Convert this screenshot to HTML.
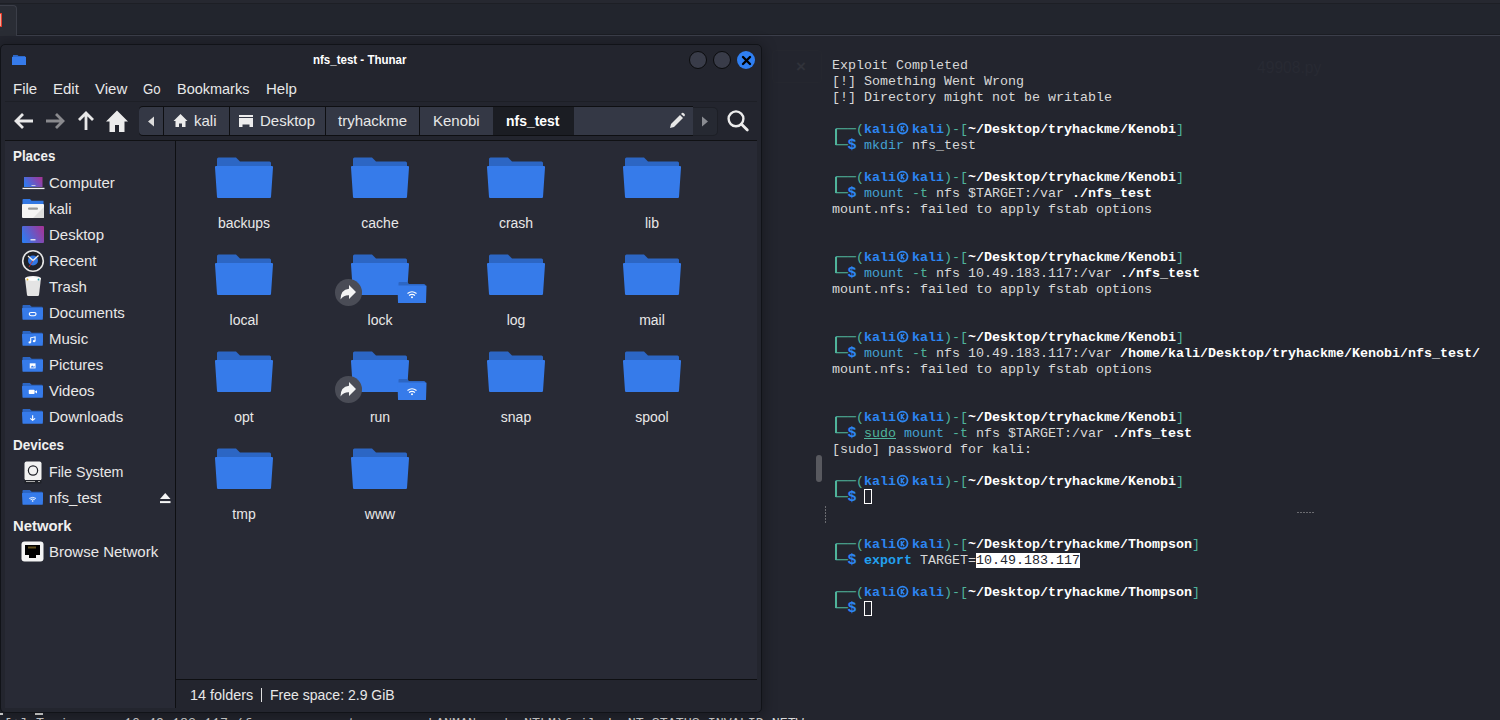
<!DOCTYPE html>
<html><head><meta charset="utf-8">
<style>
*{margin:0;padding:0;box-sizing:border-box}
html,body{width:1500px;height:720px;overflow:hidden;background:#23252e;position:relative;font-family:"Liberation Sans",sans-serif}
.a{position:absolute}
.dol{display:inline-block;width:8px;font-size:15px;text-indent:-0.5px}
.sym{display:inline-block;width:16px;height:1px;position:relative;vertical-align:baseline}
.sym svg{position:absolute;top:-12px}
#topbar{left:0;top:0;width:1500px;height:36px;background:linear-gradient(#262830 0 3px,#1d1f25 3px 4px,#22252d 4px 34px,#1b1d23 34px 35px,#3b3e4a 35px 36px)}
.term{font-family:"Liberation Mono",monospace;font-size:13.333px;line-height:16px;color:#d8d8d8;white-space:pre}
.g{color:#4fb49b}.bl{color:#2d86f2;font-weight:bold}.w{color:#ffffff;font-weight:bold}.cmd{color:#43a2d2}.op{color:#4fb49b}.ex{color:#22a0f0;font-weight:bold}
#win{left:0px;top:44px;width:762px;height:669px;background:#23252e;border:1px solid #111318;border-radius:5px;box-shadow:0 2px 14px 2px rgba(0,0,0,.30);overflow:hidden}
.ui{font-family:"Liberation Sans",sans-serif;color:#e8e8e8;white-space:nowrap}
</style></head><body>
<div id="topbar" class="a"></div>
<div class="a" style="left:0;top:5px;width:17px;height:31px;background:#2a2d35;border:1px solid #3b3e48;border-left:none;border-bottom:none;border-radius:0 4px 0 0"></div>
<div class="a" style="left:0;top:13px;width:2px;height:14px;background:#f2a594;border:1px solid #e63a2b;border-left:none;border-radius:0 1px 1px 0"></div>

<div class="a" style="left:816px;top:455px;width:6px;height:27px;border-radius:3px;background:#58595f"></div>
<div class="a" style="left:825px;top:506px;width:1px;height:17px;background:repeating-linear-gradient(#6a6b70 0 2px,transparent 2px 3px)"></div>
<div class="a" style="left:1297px;top:512px;width:17px;height:1px;background:repeating-linear-gradient(90deg,#6a6b70 0 2px,transparent 2px 3px)"></div>
<div class="a ui" style="left:1257px;top:58px;font-size:17px;color:#282a33;transform-origin:0 0;transform:scaleX(0.92)">49908.py</div>
<div class="a" style="left:772px;top:50px;width:50px;height:33px;border:1px solid #25272f;border-radius:4px"></div>
<div class="a ui" style="left:796px;top:57px;font-size:17px;font-weight:bold;color:#30323a">&#215;</div>
<div class="a term" style="left:4px;top:716px;color:#d8d8d8">[+] Trying     10.49.183.117 (from server  type      LANMAN and  NTLM)failed: NT_STATUS_INVALID_NETW</div>
<div class="a" style="left:0;top:713px;width:3px;height:1.5px;background:#e0e0e0"></div>
<div class="a" style="left:35px;top:713px;width:8px;height:1.5px;background:#e0e0e0"></div>
<!-- terminal -->
<div class="a term" style="left:832px;top:58px">Exploit Completed
[!] Something Went Wrong
[!] Directory might not be writable

<span class="g">┌──(</span><span class="bl">kali<i class="sym"><svg class="a" style="left:0;top:-9.7px" width="16" height="16" viewBox="0 0 16 16"><circle cx="6.6" cy="6.6" r="4.9" fill="none" stroke="#2d86f2" stroke-width="1.8"/><path d="M5.3 4V9.2M8.2 4L5.6 6.6L8.2 9.2" stroke="#2d86f2" stroke-width="1.4" fill="none"/></svg></i>kali</span><span class="g">)-[</span><span class="w">~/Desktop/tryhackme/Kenobi</span><span class="g">]</span>
<span class="g">└─</span><span class="bl dol">$</span> <span class="cmd">mkdir</span> nfs_test

<span class="g">┌──(</span><span class="bl">kali<i class="sym"><svg class="a" style="left:0;top:-9.7px" width="16" height="16" viewBox="0 0 16 16"><circle cx="6.6" cy="6.6" r="4.9" fill="none" stroke="#2d86f2" stroke-width="1.8"/><path d="M5.3 4V9.2M8.2 4L5.6 6.6L8.2 9.2" stroke="#2d86f2" stroke-width="1.4" fill="none"/></svg></i>kali</span><span class="g">)-[</span><span class="w">~/Desktop/tryhackme/Kenobi</span><span class="g">]</span>
<span class="g">└─</span><span class="bl dol">$</span> <span class="cmd">mount</span> <span class="op">-t</span> nfs $TARGET:/var <span class="w">./nfs_test</span>
mount.nfs: failed to apply fstab options


<span class="g">┌──(</span><span class="bl">kali<i class="sym"><svg class="a" style="left:0;top:-9.7px" width="16" height="16" viewBox="0 0 16 16"><circle cx="6.6" cy="6.6" r="4.9" fill="none" stroke="#2d86f2" stroke-width="1.8"/><path d="M5.3 4V9.2M8.2 4L5.6 6.6L8.2 9.2" stroke="#2d86f2" stroke-width="1.4" fill="none"/></svg></i>kali</span><span class="g">)-[</span><span class="w">~/Desktop/tryhackme/Kenobi</span><span class="g">]</span>
<span class="g">└─</span><span class="bl dol">$</span> <span class="cmd">mount</span> <span class="op">-t</span> nfs 10.49.183.117:/var <span class="w">./nfs_test</span>
mount.nfs: failed to apply fstab options


<span class="g">┌──(</span><span class="bl">kali<i class="sym"><svg class="a" style="left:0;top:-9.7px" width="16" height="16" viewBox="0 0 16 16"><circle cx="6.6" cy="6.6" r="4.9" fill="none" stroke="#2d86f2" stroke-width="1.8"/><path d="M5.3 4V9.2M8.2 4L5.6 6.6L8.2 9.2" stroke="#2d86f2" stroke-width="1.4" fill="none"/></svg></i>kali</span><span class="g">)-[</span><span class="w">~/Desktop/tryhackme/Kenobi</span><span class="g">]</span>
<span class="g">└─</span><span class="bl dol">$</span> <span class="cmd">mount</span> <span class="op">-t</span> nfs 10.49.183.117:/var <span class="w">/home/kali/Desktop/tryhackme/Kenobi/nfs_test/</span>
mount.nfs: failed to apply fstab options


<span class="g">┌──(</span><span class="bl">kali<i class="sym"><svg class="a" style="left:0;top:-9.7px" width="16" height="16" viewBox="0 0 16 16"><circle cx="6.6" cy="6.6" r="4.9" fill="none" stroke="#2d86f2" stroke-width="1.8"/><path d="M5.3 4V9.2M8.2 4L5.6 6.6L8.2 9.2" stroke="#2d86f2" stroke-width="1.4" fill="none"/></svg></i>kali</span><span class="g">)-[</span><span class="w">~/Desktop/tryhackme/Kenobi</span><span class="g">]</span>
<span class="g">└─</span><span class="bl dol">$</span> <span class="op" style="text-decoration:underline">sudo</span> <span class="cmd">mount</span> <span class="op">-t</span> nfs $TARGET:/var <span class="w">./nfs_test</span>
[sudo] password for kali:

<span class="g">┌──(</span><span class="bl">kali<i class="sym"><svg class="a" style="left:0;top:-9.7px" width="16" height="16" viewBox="0 0 16 16"><circle cx="6.6" cy="6.6" r="4.9" fill="none" stroke="#2d86f2" stroke-width="1.8"/><path d="M5.3 4V9.2M8.2 4L5.6 6.6L8.2 9.2" stroke="#2d86f2" stroke-width="1.4" fill="none"/></svg></i>kali</span><span class="g">)-[</span><span class="w">~/Desktop/tryhackme/Kenobi</span><span class="g">]</span>
<span class="g">└─</span><span class="bl dol">$</span> <span style="outline:1px solid #fff;outline-offset:-1px;position:relative;top:-1px">&nbsp;</span></div>

<div class="a term" style="left:832px;top:537px"><span class="g">┌──(</span><span class="bl">kali<i class="sym"><svg class="a" style="left:0;top:-9.7px" width="16" height="16" viewBox="0 0 16 16"><circle cx="6.6" cy="6.6" r="4.9" fill="none" stroke="#2d86f2" stroke-width="1.8"/><path d="M5.3 4V9.2M8.2 4L5.6 6.6L8.2 9.2" stroke="#2d86f2" stroke-width="1.4" fill="none"/></svg></i>kali</span><span class="g">)-[</span><span class="w">~/Desktop/tryhackme/Thompson</span><span class="g">]</span>
<span class="g">└─</span><span class="bl dol">$</span> <span class="ex">export</span> TARGET=<span style="background:#fff;color:#23252e">10.49.183.117</span>

<span class="g">┌──(</span><span class="bl">kali<i class="sym"><svg class="a" style="left:0;top:-9.7px" width="16" height="16" viewBox="0 0 16 16"><circle cx="6.6" cy="6.6" r="4.9" fill="none" stroke="#2d86f2" stroke-width="1.8"/><path d="M5.3 4V9.2M8.2 4L5.6 6.6L8.2 9.2" stroke="#2d86f2" stroke-width="1.4" fill="none"/></svg></i>kali</span><span class="g">)-[</span><span class="w">~/Desktop/tryhackme/Thompson</span><span class="g">]</span>
<span class="g">└─</span><span class="bl dol">$</span> <span style="outline:1px solid #fff;outline-offset:-1px">&nbsp;</span></div>

<div class="a" style="left:835px;top:129px;width:1.5px;height:16px;background:#4fb49b"></div>
<div class="a" style="left:835px;top:177px;width:1.5px;height:16px;background:#4fb49b"></div>
<div class="a" style="left:835px;top:257px;width:1.5px;height:16px;background:#4fb49b"></div>
<div class="a" style="left:835px;top:337px;width:1.5px;height:16px;background:#4fb49b"></div>
<div class="a" style="left:835px;top:417px;width:1.5px;height:16px;background:#4fb49b"></div>
<div class="a" style="left:835px;top:481px;width:1.5px;height:16px;background:#4fb49b"></div>
<div class="a" style="left:835px;top:544px;width:1.5px;height:16px;background:#4fb49b"></div>
<div class="a" style="left:835px;top:592px;width:1.5px;height:16px;background:#4fb49b"></div>
<!-- Thunar window -->
<svg width="0" height="0" style="position:absolute">
<defs>
<symbol id="fold" viewBox="0 0 58 42">
<path d="M3.5 0.5 H21 L25 4.5 H54.5 Q56 4.5 56 6 V20 H2 V2 Q2 0.5 3.5 0.5Z" fill="#2c66c4"/>
<path d="M1 9 H57 Q58.2 9 58 10.5 L56 40 Q55.9 41 55 41 H3 Q2.1 41 2 40 L0 10.5 Q-0.2 9 1 9Z" fill="#367bea"/>
</symbol>
<symbol id="sfold" viewBox="0 0 22 18" preserveAspectRatio="none">
<path d="M1.5 0 H8 L10 2 H20.5 Q21.5 2 21.5 3 V8 H0.5 V1 Q0.5 0 1.5 0Z" fill="#2c66c4"/>
<path d="M0.5 3.5 H21.5 Q22 3.5 22 4 L21.5 17 Q21.5 17.5 21 17.5 H1 Q0.5 17.5 0.5 17 L0 4 Q0 3.5 0.5 3.5Z" fill="#367bea"/>
</symbol>
</defs>
</svg>
<div id="win" class="a"></div>
<!-- titlebar -->
<svg class="a" style="left:12px;top:55px" width="14" height="10" viewBox="0 0 14 10"><path d="M1 0H5.5L6.5 1H13V4H1Z" fill="#2c66c4"/><path d="M0 1.8H14V10H0Z" fill="#367bea"/></svg>
<div class="a ui" style="left:313px;top:52.7px;font-size:12px;font-weight:bold;color:#ffffff;transform-origin:0 0;transform:scaleX(0.96)">nfs_test - Thunar</div>
<div class="a" style="left:688.8px;top:50.8px;width:18.4px;height:18.4px;border-radius:50%;background:#393c49;border:1.5px solid #0a0b0d"></div>
<div class="a" style="left:712.8px;top:50.8px;width:18.4px;height:18.4px;border-radius:50%;background:#393c49;border:1.5px solid #0a0b0d"></div>
<div class="a" style="left:736.8px;top:50.8px;width:18.4px;height:18.4px;border-radius:50%;background:#2f7ff2"></div>
<svg class="a" style="left:736.5px;top:50.5px" width="19" height="19" viewBox="0 0 19 19"><path d="M6 6L13 13M13 6L6 13" stroke="#000" stroke-width="2.4" stroke-linecap="round"/></svg>
<!-- menubar -->
<div class="a ui" style="left:13px;top:80px;font-size:15px">File</div>
<div class="a ui" style="left:53px;top:80px;font-size:15px">Edit</div>
<div class="a ui" style="left:95px;top:80px;font-size:15px">View</div>
<div class="a ui" style="left:143px;top:80px;font-size:15px;transform-origin:0 0;transform:scaleX(0.88)">Go</div>
<div class="a ui" style="left:177px;top:80px;font-size:15px;transform-origin:0 0;transform:scaleX(0.965)">Bookmarks</div>
<div class="a ui" style="left:266px;top:80px;font-size:15px">Help</div>
<div class="a" style="left:5px;top:101px;width:752px;height:1px;background:#1d1f26"></div>
<!-- toolbar icons -->
<svg class="a" style="left:13px;top:110px" width="22" height="22" viewBox="0 0 22 22"><path d="M20 11H4M10 4L3 11L10 18" stroke="#e8e8e8" stroke-width="2.8" fill="none"/></svg>
<svg class="a" style="left:44px;top:110px" width="22" height="22" viewBox="0 0 22 22"><path d="M2 11H18M12 4L19 11L12 18" stroke="#8a8a8e" stroke-width="2.8" fill="none"/></svg>
<svg class="a" style="left:75px;top:110px" width="22" height="22" viewBox="0 0 22 22"><path d="M11 20V4M4 10L11 3L18 10" stroke="#e8e8e8" stroke-width="2.8" fill="none"/></svg>
<svg class="a" style="left:105px;top:109px" width="24" height="24" viewBox="0 0 24 24"><path d="M12 1.5L1 12.5H4.5V23H10V16H14V23H19.5V12.5H23Z" fill="#ececec"/></svg>
<!-- pathbar -->
<div class="a" style="left:692px;top:106.5px;width:26px;height:29px;background:#262932;border:1px solid #1d1f26;border-left:none;border-radius:0 5px 5px 0"></div>
<div class="a" style="left:139px;top:106px;width:554px;height:30px;background:#0e0f12;border-radius:4px 0 0 4px"></div>
<div class="a" style="left:139px;top:107px;width:24px;height:27.5px;background:#343845;border-radius:4px 0 0 4px"></div>
<div class="a" style="left:164px;top:107px;width:65px;height:27.5px;background:#343845"></div>
<div class="a" style="left:230px;top:107px;width:95px;height:27.5px;background:#343845"></div>
<div class="a" style="left:326px;top:107px;width:93px;height:27.5px;background:#343845"></div>
<div class="a" style="left:420px;top:107px;width:73px;height:27.5px;background:#343845"></div>
<div class="a" style="left:493px;top:107px;width:81px;height:27.5px;background:#1b1d23"></div>
<div class="a" style="left:574px;top:107px;width:119px;height:27.5px;background:#343845"></div>
<svg class="a" style="left:146px;top:116px" width="10" height="11" viewBox="0 0 10 11"><path d="M8 0.5V10.5L2 5.5Z" fill="#dcdcdc"/></svg>
<svg class="a" style="left:173px;top:114px" width="15" height="14" viewBox="0 0 15 14"><path d="M7.5 0L0.5 7H2.5V13H6V9.5H9V13H12.5V7H14.5Z" fill="#ececec"/></svg>
<div class="a ui" style="left:194px;top:112px;font-size:15px">kali</div>
<svg class="a" style="left:238px;top:114px" width="16" height="14" viewBox="0 0 16 14"><path d="M1 1H15V3H1Z M1 4H15V13H11.5V10.5H4.5V13H1Z" fill="#ececec"/></svg>
<div class="a ui" style="left:260px;top:112px;font-size:15px">Desktop</div>
<div class="a ui" style="left:338px;top:112px;font-size:15px">tryhackme</div>
<div class="a ui" style="left:433px;top:112px;font-size:15px">Kenobi</div>
<div class="a ui" style="left:506px;top:112px;font-size:15px;font-weight:bold;color:#fff;transform-origin:0 0;transform:scaleX(0.93)">nfs_test</div>
<svg class="a" style="left:668px;top:112px" width="18" height="18" viewBox="0 0 18 18"><path d="M2 16L3 12L12 3L15 6L6 15Z" fill="#e8e8e8"/><path d="M13 2L14 1Q15 0.5 16 1.5L16.5 2Q17.5 3 16.5 4L16 4.5Z" fill="#e8e8e8"/></svg>
<svg class="a" style="left:700px;top:116px" width="10" height="11" viewBox="0 0 10 11"><path d="M2 0.5V10.5L8 5.5Z" fill="#8a8c92"/></svg>
<svg class="a" style="left:726px;top:109px" width="24" height="24" viewBox="0 0 24 24"><circle cx="10" cy="9.8" r="7.4" stroke="#ececec" stroke-width="2.4" fill="none"/><path d="M15.3 15.1L21.3 21.1" stroke="#ececec" stroke-width="2.8" stroke-linecap="round"/></svg>
<!-- separators -->
<div class="a" style="left:5px;top:140px;width:752px;height:1px;background:#101114"></div>
<!-- sidebar -->
<div class="a" style="left:5px;top:141px;width:170px;height:567px;background:#282a35"></div>
<div class="a" style="left:175px;top:141px;width:1px;height:567px;background:#0e0f12"></div>
<!-- icon view -->
<div class="a" style="left:176px;top:141px;width:581px;height:539px;background:#282a35"></div>
<div class="a" style="left:176px;top:679px;width:581px;height:1px;background:#0e0f12"></div>
<div class="a ui" style="left:13px;top:147.30px;font-size:15px;line-height:17px;font-weight:bold;color:#f0f0f0;transform-origin:0 0;transform:scaleX(0.89)">Places</div>
<div class="a ui" style="left:13px;top:436.30px;font-size:15px;line-height:17px;font-weight:bold;color:#f0f0f0;transform-origin:0 0;transform:scaleX(0.9)">Devices</div>
<div class="a ui" style="left:13px;top:517.30px;font-size:15px;line-height:17px;font-weight:bold;color:#f0f0f0;transform-origin:0 0;transform:scaleX(0.99)">Network</div>
<div class="a ui" style="left:49px;top:174.30px;font-size:15px;line-height:17px">Computer</div>
<div class="a ui" style="left:49px;top:200.30px;font-size:15px;line-height:17px">kali</div>
<div class="a ui" style="left:49px;top:226.30px;font-size:15px;line-height:17px">Desktop</div>
<div class="a ui" style="left:49px;top:252.30px;font-size:15px;line-height:17px">Recent</div>
<div class="a ui" style="left:49px;top:278.30px;font-size:15px;line-height:17px">Trash</div>
<div class="a ui" style="left:49px;top:304.30px;font-size:15px;line-height:17px">Documents</div>
<div class="a ui" style="left:49px;top:330.30px;font-size:15px;line-height:17px">Music</div>
<div class="a ui" style="left:49px;top:356.30px;font-size:15px;line-height:17px">Pictures</div>
<div class="a ui" style="left:49px;top:382.30px;font-size:15px;line-height:17px">Videos</div>
<div class="a ui" style="left:49px;top:408.30px;font-size:15px;line-height:17px">Downloads</div>
<div class="a ui" style="left:49px;top:463.30px;font-size:15px;line-height:17px;transform-origin:0 0;transform:scaleX(0.95)">File System</div>
<div class="a ui" style="left:49px;top:489.30px;font-size:15px;line-height:17px">nfs_test</div>
<div class="a ui" style="left:49px;top:543.30px;font-size:15px;line-height:17px">Browse Network</div>
<svg class="a" style="left:215px;top:157px" width="58" height="42"><use href="#fold"/></svg>
<div class="a ui" style="left:184px;width:120px;text-align:center;top:215.15px;font-size:14px;line-height:16px">backups</div>
<svg class="a" style="left:351px;top:157px" width="58" height="42"><use href="#fold"/></svg>
<div class="a ui" style="left:320px;width:120px;text-align:center;top:215.15px;font-size:14px;line-height:16px">cache</div>
<svg class="a" style="left:487px;top:157px" width="58" height="42"><use href="#fold"/></svg>
<div class="a ui" style="left:456px;width:120px;text-align:center;top:215.15px;font-size:14px;line-height:16px">crash</div>
<svg class="a" style="left:623px;top:157px" width="58" height="42"><use href="#fold"/></svg>
<div class="a ui" style="left:592px;width:120px;text-align:center;top:215.15px;font-size:14px;line-height:16px">lib</div>
<svg class="a" style="left:215px;top:254px" width="58" height="42"><use href="#fold"/></svg>
<div class="a ui" style="left:184px;width:120px;text-align:center;top:312.15px;font-size:14px;line-height:16px">local</div>
<svg class="a" style="left:351px;top:254px" width="58" height="42"><use href="#fold"/></svg>
<div class="a ui" style="left:320px;width:120px;text-align:center;top:312.15px;font-size:14px;line-height:16px">lock</div>
<svg class="a" style="left:487px;top:254px" width="58" height="42"><use href="#fold"/></svg>
<div class="a ui" style="left:456px;width:120px;text-align:center;top:312.15px;font-size:14px;line-height:16px">log</div>
<svg class="a" style="left:623px;top:254px" width="58" height="42"><use href="#fold"/></svg>
<div class="a ui" style="left:592px;width:120px;text-align:center;top:312.15px;font-size:14px;line-height:16px">mail</div>
<svg class="a" style="left:215px;top:351px" width="58" height="42"><use href="#fold"/></svg>
<div class="a ui" style="left:184px;width:120px;text-align:center;top:409.15px;font-size:14px;line-height:16px">opt</div>
<svg class="a" style="left:351px;top:351px" width="58" height="42"><use href="#fold"/></svg>
<div class="a ui" style="left:320px;width:120px;text-align:center;top:409.15px;font-size:14px;line-height:16px">run</div>
<svg class="a" style="left:487px;top:351px" width="58" height="42"><use href="#fold"/></svg>
<div class="a ui" style="left:456px;width:120px;text-align:center;top:409.15px;font-size:14px;line-height:16px">snap</div>
<svg class="a" style="left:623px;top:351px" width="58" height="42"><use href="#fold"/></svg>
<div class="a ui" style="left:592px;width:120px;text-align:center;top:409.15px;font-size:14px;line-height:16px">spool</div>
<svg class="a" style="left:215px;top:448px" width="58" height="42"><use href="#fold"/></svg>
<div class="a ui" style="left:184px;width:120px;text-align:center;top:506.15px;font-size:14px;line-height:16px">tmp</div>
<svg class="a" style="left:351px;top:448px" width="58" height="42"><use href="#fold"/></svg>
<div class="a ui" style="left:320px;width:120px;text-align:center;top:506.15px;font-size:14px;line-height:16px">www</div>

<svg width="0" height="0" style="position:absolute"><defs>
<linearGradient id="gp" x1="0" y1="0.7" x2="1" y2="0.3"><stop offset="0" stop-color="#2f7bf0"/><stop offset="1" stop-color="#a0379a"/></linearGradient>
</defs></svg>
<!-- Computer -->
<svg class="a" style="left:22px;top:175px" width="23" height="16" viewBox="0 0 23 16"><rect x="2" y="2" width="18.5" height="10" fill="url(#gp)"/><rect x="9.5" y="10" width="4" height="1" fill="#c8c8e0"/><rect x="0.5" y="12.8" width="22" height="1.3" fill="#f2f2f2"/></svg>
<!-- kali home -->
<svg class="a" style="left:21px;top:198px" width="24" height="21" viewBox="0 0 24 21"><path d="M2.5 1H9L10.5 2.8H22.5V7H1.5V2Q1.5 1 2.5 1Z" fill="#3277e3"/><rect x="1" y="6" width="22" height="14" rx="1" fill="#f4f4f4"/><path d="M23 9L12 20H22Q23 20 23 19Z" fill="#dedede"/><rect x="7" y="9.5" width="10" height="2.2" rx="1" fill="#9a9a9a"/></svg>
<!-- Desktop -->
<svg class="a" style="left:21px;top:225px" width="24" height="19" viewBox="0 0 24 19"><rect x="1" y="1" width="22" height="17" rx="1" fill="url(#gp)"/><rect x="9.5" y="14" width="5" height="1.5" fill="#e0e0f0"/></svg>
<!-- Recent -->
<svg class="a" style="left:21px;top:249px" width="24" height="24" viewBox="0 0 24 24"><circle cx="12" cy="12" r="10.3" fill="#1f2128" stroke="#e6e6e6" stroke-width="1.6"/><circle cx="12" cy="11.5" r="5" fill="#3277e3"/><path d="M7 7L12 11.5L17.5 6.5" stroke="#f0f0f0" stroke-width="1.3" fill="none"/><path d="M12 11.5L8 18" stroke="#c03030" stroke-width="0.9"/></svg>
<!-- Trash -->
<svg class="a" style="left:24px;top:275px" width="18" height="22" viewBox="0 0 18 22"><path d="M1 3H17L15 20Q14.8 21 13.8 21H4.2Q3.2 21 3 20Z" fill="#e4e4e4"/><ellipse cx="9" cy="3.5" rx="8" ry="2.5" fill="#f6f6f6"/><ellipse cx="9" cy="4" rx="6" ry="1.5" fill="#ffffff"/><circle cx="3.5" cy="4.5" r="0.9" fill="#e8b830"/><circle cx="14.5" cy="4.5" r="0.9" fill="#30a8b0"/></svg>
<svg class="a" style="left:22px;top:305.3px" width="21.3" height="15.2"><use href="#sfold" width="21.3" height="15.2"/></svg><svg class="a" style="left:22px;top:305.3px" width="21.3" height="15.2" viewBox="0 0 22 18" preserveAspectRatio="none"><rect x="7.5" y="9" width="7" height="3.6" rx="1.8" fill="none" stroke="#fff" stroke-width="1.2"/></svg><svg class="a" style="left:22px;top:331.3px" width="21.3" height="15.2"><use href="#sfold" width="21.3" height="15.2"/></svg><svg class="a" style="left:22px;top:331.3px" width="21.3" height="15.2" viewBox="0 0 22 18" preserveAspectRatio="none"><path d="M9 13.5V8L13.5 7V12" stroke="#fff" stroke-width="1.1" fill="none"/><circle cx="8" cy="13.5" r="1.3" fill="#fff"/><circle cx="12.5" cy="12" r="1.3" fill="#fff"/></svg><svg class="a" style="left:22px;top:357.3px" width="21.3" height="15.2"><use href="#sfold" width="21.3" height="15.2"/></svg><svg class="a" style="left:22px;top:357.3px" width="21.3" height="15.2" viewBox="0 0 22 18" preserveAspectRatio="none"><rect x="8" y="7.5" width="6" height="6" fill="#fff"/><path d="M9 12L10.5 10L12 11.5L13 10.5V12.5H9Z" fill="#367bea"/></svg><svg class="a" style="left:22px;top:383.3px" width="21.3" height="15.2"><use href="#sfold" width="21.3" height="15.2"/></svg><svg class="a" style="left:22px;top:383.3px" width="21.3" height="15.2" viewBox="0 0 22 18" preserveAspectRatio="none"><rect x="7" y="8" width="6" height="5" rx="0.8" fill="#fff"/><path d="M13 10.5L15.5 8.5V12.5Z" fill="#fff"/></svg><svg class="a" style="left:22px;top:409.3px" width="21.3" height="15.2"><use href="#sfold" width="21.3" height="15.2"/></svg><svg class="a" style="left:22px;top:409.3px" width="21.3" height="15.2" viewBox="0 0 22 18" preserveAspectRatio="none"><path d="M11 7.5V13M8.5 11L11 13.5L13.5 11" stroke="#fff" stroke-width="1.2" fill="none"/></svg>
<!-- File System -->
<svg class="a" style="left:23px;top:461px" width="20" height="23" viewBox="0 0 20 23"><rect x="1.5" y="0.5" width="17" height="19" rx="2" fill="#f2f2f2"/><rect x="1.5" y="19" width="17" height="3.5" rx="1" fill="#1f2128"/><rect x="3" y="20" width="9" height="1" fill="#aaa"/><rect x="15" y="20" width="2" height="1" fill="#aaa"/><circle cx="10" cy="9.5" r="5.2" fill="#1f2128"/><circle cx="10" cy="9.5" r="4" fill="#f2f2f2"/></svg>
<svg class="a" style="left:22px;top:490.3px" width="21.3" height="15.2"><use href="#sfold" width="21.3" height="15.2"/></svg><svg class="a" style="left:22px;top:490.3px" width="21.3" height="15.2" viewBox="0 0 22 18" preserveAspectRatio="none"><path d="M7.5 10Q11 7.5 14.5 10M8.8 11.5Q11 10 13.2 11.5" stroke="#fff" stroke-width="1" fill="none"/><circle cx="11" cy="13" r="0.9" fill="#fff"/></svg>
<svg class="a" style="left:159.6px;top:492.8px" width="11" height="11" viewBox="0 0 11 11"><path d="M5.25 0L10.5 5.9H0Z" fill="#f6f6f6"/><rect x="0" y="8.1" width="10.5" height="2" fill="#f6f6f6"/></svg>
<!-- Browse Network -->
<svg class="a" style="left:21px;top:541px" width="23" height="21" viewBox="0 0 23 21"><rect x="0.5" y="0.5" width="22" height="20" rx="3" fill="#f4f4f4"/><path d="M4 4H19V14H15V17H8V14H4Z" fill="#000"/><path d="M8 5.5V7.5M10 5.5V7.5M12 5.5V7.5M14 5.5V7.5" stroke="#d8b040" stroke-width="0.9"/></svg>
<!-- emblems -->
<div class="a" style="left:335px;top:279px;width:26.5px;height:26.5px;border-radius:50%;background:#4a4c56"></div><svg class="a" style="left:335px;top:279px" width="27" height="27" viewBox="0 0 27 27"><path d="M14 6L21 13L14 20V16.3Q9 16 5.5 20.5Q5.5 10.5 14 9.7Z" fill="#f4f4f4"/></svg><svg class="a" style="left:397px;top:281px" width="30" height="23" viewBox="0 0 30 23"><path d="M2.5 1H10L12 3H27Q28.5 3 28.5 4.5V10H1.5V2Q1.5 1 2.5 1Z" fill="#2c66c4"/><path d="M1 4.5H29Q29.5 4.5 29.5 5L29 21.5Q29 22 28.5 22H1.5Q1 22 1 21.5L0.5 5Q0.5 4.5 1 4.5Z" fill="#367bea"/><path d="M10.5 12.5Q15 9 19.5 12.5M12 14.5Q15 12.3 18 14.5" stroke="#fff" stroke-width="1.1" fill="none"/><circle cx="15" cy="16.3" r="1" fill="#fff"/></svg><div class="a" style="left:335px;top:376px;width:26.5px;height:26.5px;border-radius:50%;background:#4a4c56"></div><svg class="a" style="left:335px;top:376px" width="27" height="27" viewBox="0 0 27 27"><path d="M14 6L21 13L14 20V16.3Q9 16 5.5 20.5Q5.5 10.5 14 9.7Z" fill="#f4f4f4"/></svg><svg class="a" style="left:397px;top:378px" width="30" height="23" viewBox="0 0 30 23"><path d="M2.5 1H10L12 3H27Q28.5 3 28.5 4.5V10H1.5V2Q1.5 1 2.5 1Z" fill="#2c66c4"/><path d="M1 4.5H29Q29.5 4.5 29.5 5L29 21.5Q29 22 28.5 22H1.5Q1 22 1 21.5L0.5 5Q0.5 4.5 1 4.5Z" fill="#367bea"/><path d="M10.5 12.5Q15 9 19.5 12.5M12 14.5Q15 12.3 18 14.5" stroke="#fff" stroke-width="1.1" fill="none"/><circle cx="15" cy="16.3" r="1" fill="#fff"/></svg>
<div class="a ui" style="left:190px;top:686.30px;font-size:15px;line-height:17px;transform-origin:0 0;transform:scaleX(0.96)">14 folders</div><div class="a" style="left:260.5px;top:688px;width:1.5px;height:14px;background:#e0e0e0"></div><div class="a ui" style="left:269.5px;top:686.30px;font-size:15px;line-height:17px;transform-origin:0 0;transform:scaleX(0.935)">Free space: 2.9 GiB</div>
</body></html>
